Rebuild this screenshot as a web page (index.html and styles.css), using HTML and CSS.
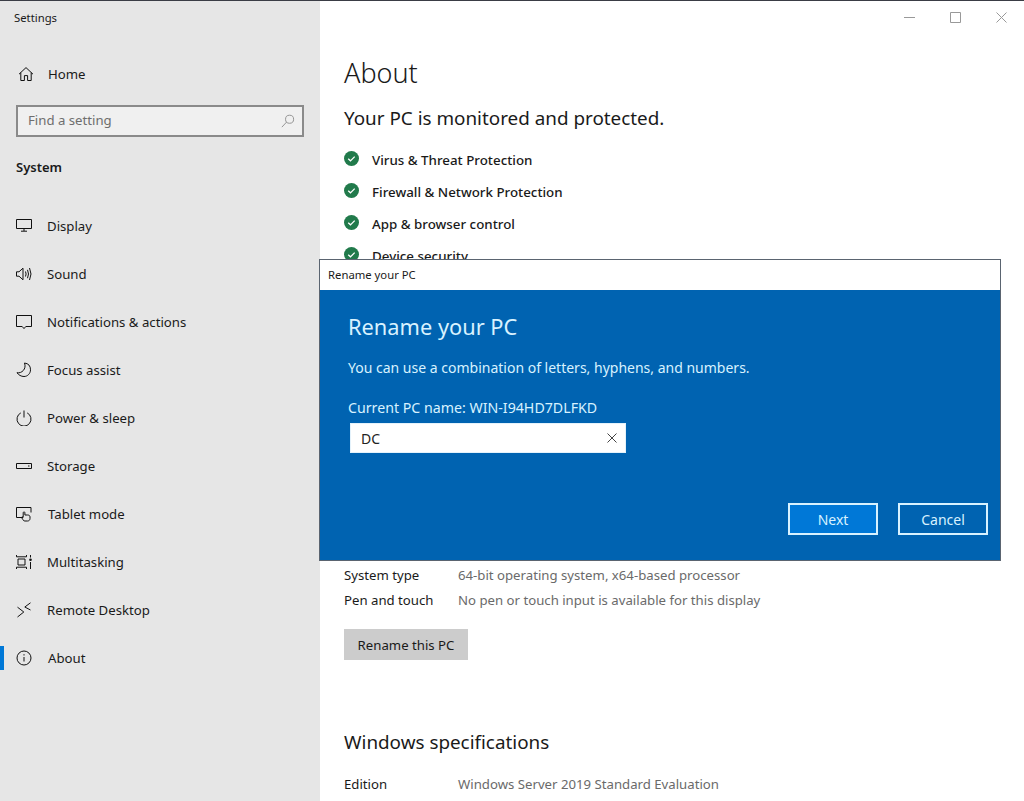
FILE: index.html
```html
<!DOCTYPE html>
<html lang="en">
<head>
    <meta charset="UTF-8">
    <meta name="viewport" content="width=device-width, initial-scale=1.0">
    <title>Settings</title>
    <link rel="stylesheet" href="styles.css">
</head>
<body>
    <div class="window">
        <aside class="sidebar">
            <div class="app-title">Settings</div>
            <a class="home-link">
                <svg class="icon" viewBox="0 0 16 16"><path d="M1 8.200 8 1.600l7 6.600M2.800 6.600v7.900h3.600V9.600h3.200v4.900h3.600V6.600"/></svg>
                <span>Home</span>
            </a>
            <div class="search-box">
                <span>Find a setting</span>
                <svg class="search-icon" viewBox="0 0 16 16"><circle cx="9.800" cy="6" r="4.600"/><path d="M6.400 9.200 1 15"/></svg>
            </div>
            <div class="group-title">System</div>
            <ul class="nav-list">
                <li class="nav-item">
                    <svg class="icon" viewBox="0 0 16 16"><path d="M.5 1.500h15v9H.5zM8 10.500v2.500M5 13.200h6"/></svg>
                    <span>Display</span>
                </li>
                <li class="nav-item">
                    <svg class="icon" viewBox="0 0 16 16"><path d="M.5 5.800h2.500L7 2.200v11.600L3 10.200H.5zM9.500 5.500q1.200 2.500 0 5M11.500 3.800q2 4.200 0 8.400M13.500 2q3 6 0 12"/></svg>
                    <span>Sound</span>
                </li>
                <li class="nav-item">
                    <svg class="icon" viewBox="0 0 16 16"><path d="M.5 1.500h15v11H9.800L8 14.600 6.200 12.500H.5z"/></svg>
                    <span>Notifications &amp; actions</span>
                </li>
                <li class="nav-item">
                    <svg class="icon" viewBox="0 0 16 16"><path d="M8.500 1q6 .8 6 6.800c0 3.800-3 6.700-6.500 6.700-2.800 0-5.500-1.500-7-3.800 4.500 1 9.800-3.600 7.500-9.700z"/></svg>
                    <span>Focus assist</span>
                </li>
                <li class="nav-item">
                    <svg class="icon" viewBox="0 0 16 16"><path d="M4.800 2.900a7 7 0 1 0 6.400 0M8 .5v7"/></svg>
                    <span>Power &amp; sleep</span>
                </li>
                <li class="nav-item">
                    <svg class="icon" viewBox="0 0 16 16"><path d="M.5 5.500h15v5H.5zM12 8h1.500"/></svg>
                    <span>Storage</span>
                </li>
                <li class="nav-item nav-item-wide">
                    <svg class="icon" viewBox="0 0 16 16"><path d="M7 11.500H.5v-10h14.500v5M8.200 15c-1-1-2-2.200-2.500-3.200-.4-.9.700-1.400 1.500-.5V6.700c0-1.100 1.700-1.100 1.700 0V9h2.800c1.500 0 2.300.8 2.300 2v1.500c0 1.500-1 2.500-2.500 2.500z"/></svg>
                    <span>Tablet mode</span>
                </li>
                <li class="nav-item">
                    <svg class="icon" viewBox="0 0 16 16"><path d="M.5 1v1.800h10V1M2 5h7v6H2zM.5 15v-1.800h10V15M14.500 1v2.500M14.500 8v7"/><circle class="dot" cx="14.500" cy="5.700" r="1.300"/></svg>
                    <span>Multitasking</span>
                </li>
                <li class="nav-item">
                    <svg class="icon" viewBox="0 0 16 16"><path d="M1.500 5.200 7.800 10 1.500 15M14.500.8 8.800 5l5.700 3"/></svg>
                    <span>Remote Desktop</span>
                </li>
                <li class="nav-item nav-item-wide active">
                    <svg class="icon" viewBox="0 0 16 16"><circle cx="8" cy="8" r="7"/><path d="M8 7v4.500M8 4.200v1.300"/></svg>
                    <span>About</span>
                </li>
            </ul>
        </aside>

        <main class="content">
            <div class="window-controls">
                <svg viewBox="0 0 11 11"><path d="M0 5.500h11"/></svg>
                <svg viewBox="0 0 11 11"><path d="M.5.5h10v10H.5z"/></svg>
                <svg viewBox="0 0 11 11"><path d="m.5.5 10 10M10.500.5l-10 10"/></svg>
            </div>
            <h1>About</h1>
            <h2>Your PC is monitored and protected.</h2>
            <ul class="status-list">
                <li>
                    <svg class="check" viewBox="0 0 16 16"><circle cx="8" cy="8" r="8"/><path d="m4.500 8.300 2.400 2.200 4.500-4.500"/></svg>
                    <span>Virus &amp; Threat Protection</span>
                </li>
                <li>
                    <svg class="check" viewBox="0 0 16 16"><circle cx="8" cy="8" r="8"/><path d="m4.500 8.300 2.400 2.200 4.500-4.500"/></svg>
                    <span>Firewall &amp; Network Protection</span>
                </li>
                <li>
                    <svg class="check" viewBox="0 0 16 16"><circle cx="8" cy="8" r="8"/><path d="m4.500 8.300 2.400 2.200 4.500-4.500"/></svg>
                    <span>App &amp; browser control</span>
                </li>
                <li>
                    <svg class="check" viewBox="0 0 16 16"><circle cx="8" cy="8" r="8"/><path d="m4.500 8.300 2.400 2.200 4.500-4.500"/></svg>
                    <span>Device security</span>
                </li>
            </ul>
            <dl class="spec-list device-specs">
                <dt>System type</dt>
                <dd>64-bit operating system, x64-based processor</dd>
                <dt>Pen and touch</dt>
                <dd>No pen or touch input is available for this display</dd>
            </dl>
            <button class="rename-btn">Rename this PC</button>
            <h3>Windows specifications</h3>
            <dl class="spec-list">
                <dt>Edition</dt>
                <dd>Windows Server 2019 Standard Evaluation</dd>
            </dl>
        </main>
    </div>

    <div class="dialog">
        <div class="dialog-title">Rename your PC</div>
        <div class="dialog-body">
            <h2>Rename your PC</h2>
            <p class="dialog-hint">You can use a combination of letters, hyphens, and numbers.</p>
            <p class="dialog-current">Current PC name: WIN-I94HD7DLFKD</p>
            <div class="name-input">
                <span>DC</span>
                <svg viewBox="0 0 10 10"><path d="m.5.5 9 9M9.500.5l-9 9"/></svg>
            </div>
            <div class="dialog-actions">
                <button class="btn btn-primary">Next</button>
                <button class="btn">Cancel</button>
            </div>
        </div>
    </div>
</body>
</html>
```

FILE: styles.css
```css
* {
    box-sizing: border-box;
}
html, body {
    margin: 0;
    height: 100%;
}
body {
    font-family: "Noto Sans", "Open Sans", Arial, sans-serif;
    font-size: 13.2px;
    color: #1a1a1a;
    background-color: #fff;
    overflow: hidden;
    position: relative;
}
svg {
    fill: none;
    stroke: currentColor;
    stroke-width: 1;
}
h1, h2, h3, p, ul, dl, dd {
    margin: 0;
    padding: 0;
    font-weight: 400;
}
ul {
    list-style: none;
}

.window {
    display: flex;
    height: 801px;
    border-top: 1px solid #3a3d45;
}

/* sidebar */
.sidebar {
    width: 320px;
    flex: none;
    background-color: #e6e6e6;
    padding: 0 16px;
}
.app-title {
    font-size: 11.3px;
    line-height: 16px;
    margin: 9px 0 0 -2px;
}
.home-link {
    display: flex;
    align-items: center;
    gap: 14px;
    height: 24px;
    margin-top: 36px;
    padding-left: 2px;
}
.icon {
    width: 16px;
    height: 16px;
    flex: none;
    color: #111;
}
.search-box {
    display: flex;
    align-items: center;
    justify-content: space-between;
    height: 32px;
    margin-top: 19px;
    padding: 0 7px 2px 10px;
    border: 2px solid #8a8a8a;
    background-color: #f0f0f0;
    color: #6e6e6e;
}
.search-icon {
    width: 14px;
    height: 14px;
    color: #888;
    margin-top: 2px;
}
.group-title {
    font-weight: 600;
    font-size: 13px;
    line-height: 20px;
    margin-top: 20px;
}
.nav-list {
    margin-top: 25px;
}
.nav-item {
    position: relative;
    display: flex;
    align-items: center;
    gap: 15px;
    height: 48px;
}
.nav-item-wide {
    gap: 16px;
}
.nav-item .dot {
    fill: currentColor;
    stroke: none;
}
.nav-item.active::before {
    content: "";
    position: absolute;
    left: -16px;
    top: 12px;
    width: 4px;
    height: 24px;
    background-color: #0078d7;
}

/* main column */
.content {
    flex: 1;
    position: relative;
    padding: 53px 24px 0;
}
.window-controls {
    position: absolute;
    top: 11px;
    right: 17px;
    display: flex;
    gap: 35px;
    color: #999;
}
.window-controls svg {
    width: 11px;
    height: 11px;
}
.content h1 {
    font-size: 27px;
    line-height: 38px;
    font-weight: 300;
}
.content h2 {
    font-size: 18.85px;
    line-height: 28px;
    margin-top: 12px;
}
.status-list {
    margin-top: 12px;
}
.status-list li {
    display: flex;
    align-items: center;
    gap: 13px;
    height: 32px;
    font-size: 13.35px;
    font-weight: 500;
}
.check {
    width: 15px;
    height: 15px;
    flex: none;
    margin-top: -3px;
}
.check circle {
    fill: #217a4b;
    stroke: none;
}
.check path {
    stroke: #fff;
    stroke-width: 1.4;
}
.spec-list {
    display: grid;
    grid-template-columns: 114px 1fr;
    row-gap: 5px;
    line-height: 20px;
}
.spec-list dd {
    color: #6a6a6a;
}
.device-specs {
    margin-top: 293px;
}
.rename-btn {
    display: block;
    width: 124px;
    height: 31px;
    margin-top: 19px;
    border: 0;
    padding: 0;
    background-color: #cccccc;
    font: inherit;
    color: #1a1a1a;
}
.content h3 {
    font-size: 18.85px;
    line-height: 28px;
    margin: 68px 0 18px;
}

/* rename dialog */
.dialog {
    position: absolute;
    left: 319px;
    top: 259px;
    width: 682px;
    height: 302px;
    display: flex;
    flex-direction: column;
    border: 1px solid #5a6470;
    background-color: #fff;
}
.dialog-title {
    height: 30px;
    flex: none;
    padding-left: 8px;
    font-size: 11.3px;
    line-height: 30px;
}
.dialog-body {
    flex: 1;
    display: flex;
    flex-direction: column;
    padding: 21px 12px 0 28px;
    background-color: #0063b1;
    color: #d8f2ff;
}
.dialog-body h2 {
    font-size: 21.8px;
    line-height: 32px;
}
.dialog-hint {
    font-size: 14px;
    line-height: 20px;
    margin-top: 15px;
}
.dialog-current {
    font-size: 14.2px;
    line-height: 20px;
    margin-top: 20px;
}
.name-input {
    display: flex;
    align-items: center;
    justify-content: space-between;
    width: 276px;
    height: 30px;
    margin: 5px 0 0 2px;
    padding: 0 8px 0 10px;
    border: 1px solid #e4f2fb;
    background-color: #fff;
    color: #222;
    font-size: 14px;
}
.name-input svg {
    width: 10px;
    height: 10px;
    color: #444;
}
.dialog-actions {
    display: flex;
    justify-content: flex-end;
    gap: 20px;
    margin-top: 50px;
}
.btn {
    width: 90px;
    height: 32px;
    border: 2px solid #d8f2ff;
    padding: 0;
    background-color: transparent;
    color: #d8f2ff;
    font: inherit;
    font-size: 14px;
}
.btn-primary {
    background-color: #0078d7;
}
```
